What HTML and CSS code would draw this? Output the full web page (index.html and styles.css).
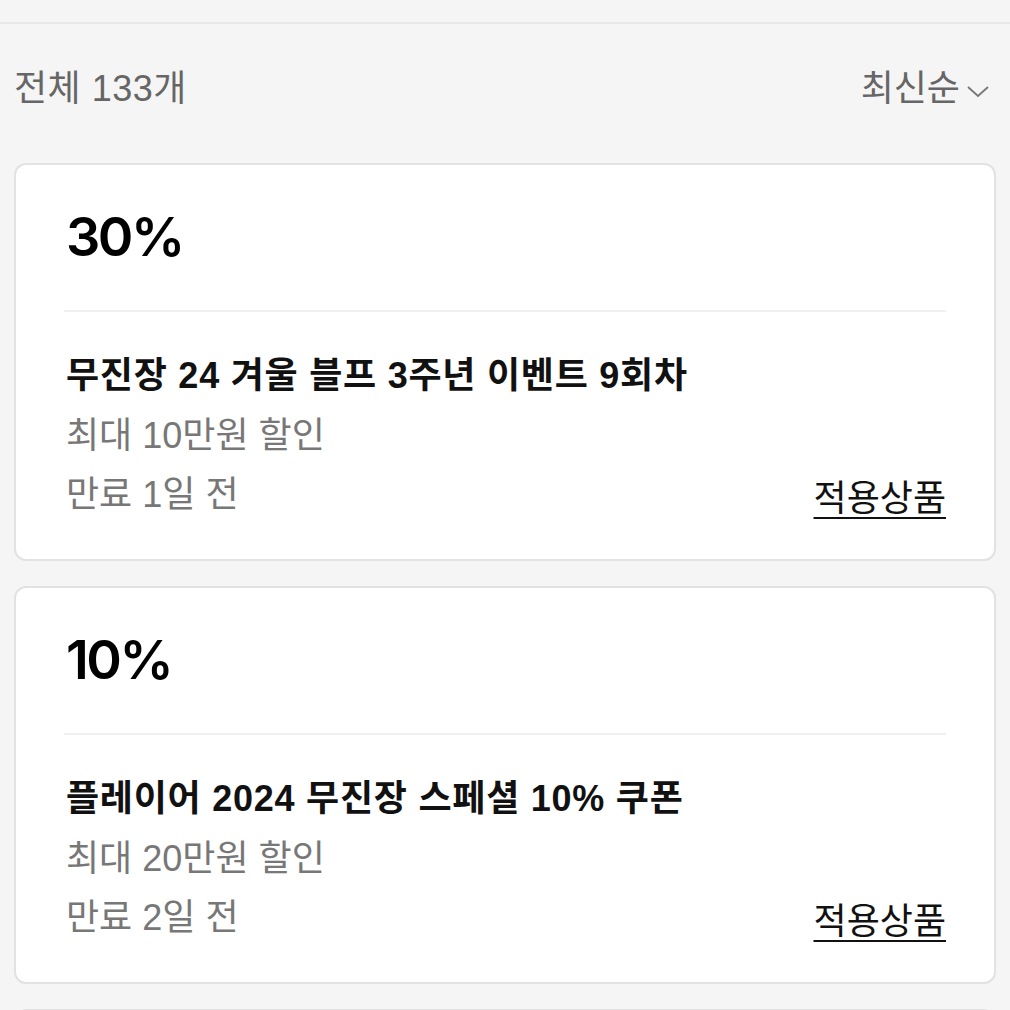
FILE: index.html
```html
<!DOCTYPE html>
<html lang="ko">
<head>
<meta charset="utf-8">
<link rel="stylesheet" href="styles.css">
</head>
<body>
<div class="topbar"></div>
<div class="summary">
  <span class="count">전체 133개</span>
  <span class="sort">최신순<svg class="chev" width="24" height="14" viewBox="0 0 24 14"><path d="M2 3 L12 12 L22 3" fill="none" stroke="#777" stroke-width="1.8"/></svg></span>
</div>
<div class="card">
  <div class="rate">30%</div>
  <div class="divider"></div>
  <div class="title">무진장 24 겨울 블프 3주년 이벤트 9회차</div>
  <div class="sub">최대 10만원 할인</div>
  <div class="row">
    <span class="sub2">만료 1일 전</span>
    <a class="link">적용상품</a>
  </div>
</div>
<div class="card">
  <div class="rate">10%</div>
  <div class="divider"></div>
  <div class="title">플레이어 2024 무진장 스페셜 10% 쿠폰</div>
  <div class="sub">최대 20만원 할인</div>
  <div class="row">
    <span class="sub2">만료 2일 전</span>
    <a class="link">적용상품</a>
  </div>
</div>
<div class="card"></div>
</body>
</html>
```
FILE: styles.css
```css
body {
  margin: 0;
  background: #f5f5f5;
  font-family: "Liberation Sans", "Noto Sans CJK KR", sans-serif;
  overflow: hidden;
}
.topbar {
  height: 22px;
  border-bottom: 2px solid #e8e8e8;
}
.summary {
  display: flex;
  justify-content: space-between;
  align-items: center;
  padding: 42px 20px 0 14px;
  margin-bottom: 51px;
  height: 46px;
  color: #666;
  font-size: 36px;
  line-height: 46px;
}
.count {
  letter-spacing: 0.5px;
}
.sort {
  display: flex;
  align-items: center;
}
.chev {
  margin-left: 6px;
  margin-top: 4px;
}
.card {
  margin: 0 14px 25px;
  border: 2px solid #e2e2e2;
  border-radius: 12px;
  background: #fff;
  padding: 0 48px 40px 50px;
  min-height: 354px;
  box-sizing: content-box;
}
.rate {
  padding-top: 44px;
  font-family: Inter, "Liberation Sans", sans-serif;
  font-weight: 600;
  font-size: 54px;
  line-height: 56px;
  letter-spacing: -2.5px;
  color: #000;
  margin-bottom: 45px;
}
.divider {
  height: 2px;
  background: #f0f0f0;
  margin-left: -2px;
}
.title {
  padding-top: 41px;
  font-size: 36px;
  line-height: 46px;
  font-weight: 700;
  color: #111;
  letter-spacing: 0.75px;
}
.sub, .row {
  margin-top: 14px;
  font-size: 36px;
  line-height: 46px;
  color: #777;
}
.row {
  margin-top: 13px;
  display: flex;
  justify-content: space-between;
  align-items: baseline;
}
.link {
  color: #111;
  text-decoration: underline;
  text-decoration-thickness: 2px;
  text-underline-offset: 6px;
  position: relative;
  top: 4px;
}
```
